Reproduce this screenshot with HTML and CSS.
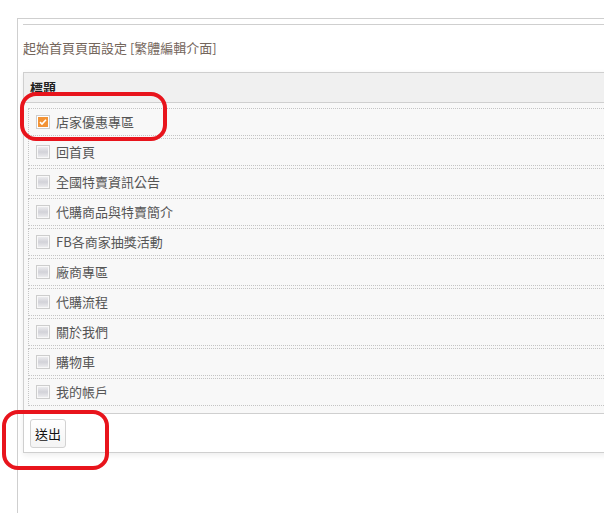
FILE: index.html
```html
<!DOCTYPE html>
<html lang="zh-Hant">
<head>
    <meta charset="UTF-8">
    <title>起始首頁頁面設定</title>
    <link rel="stylesheet" href="styles.css">
</head>
<body>
    <div class="page">
        <div class="rule"></div>
        <div class="title">起始首頁頁面設定 [繁體編輯介面]</div>

        <div class="panel">
            <div class="panel-head">標題</div>
            <div class="list">
                <label class="row"><span class="check checked"><svg viewBox="0 0 14 14" width="14" height="14"><rect x="0.5" y="0.5" width="13" height="13" fill="#fff" stroke="#cdcdcd"/><rect x="2" y="2" width="10" height="10" fill="#f29336"/><path d="M4 7.2 L6 9.1 L10 4.8" fill="none" stroke="#fff" stroke-width="1.6"/></svg></span><span class="name">店家優惠專區</span></label>
                <label class="row"><span class="check"></span><span class="name">回首頁</span></label>
                <label class="row"><span class="check"></span><span class="name">全國特賣資訊公告</span></label>
                <label class="row"><span class="check"></span><span class="name">代購商品與特賣簡介</span></label>
                <label class="row"><span class="check"></span><span class="name">FB各商家抽獎活動</span></label>
                <label class="row"><span class="check"></span><span class="name">廠商專區</span></label>
                <label class="row"><span class="check"></span><span class="name">代購流程</span></label>
                <label class="row"><span class="check"></span><span class="name">關於我們</span></label>
                <label class="row"><span class="check"></span><span class="name">購物車</span></label>
                <label class="row"><span class="check"></span><span class="name">我的帳戶</span></label>
            </div>
            <div class="foot">
                <button class="btn">送出</button>
            </div>
        </div>
    </div>

    <!-- red marks drawn over the screenshot -->
    <div class="mark mark-row"></div>
    <div class="mark mark-btn"></div>
</body>
</html>
```

FILE: styles.css
```css
* {
    margin: 0;
    padding: 0;
    box-sizing: border-box;
}

body {
    font-family: "Noto Sans CJK TC", "Noto Sans", sans-serif;
    font-size: 13px;
    background: #fff;
    overflow: hidden;
    height: 513px;
    position: relative;
}

.page {
    margin: 18px 0 0 17px;
    border-left: 1px solid #cfcfcf;
    border-top: 1px solid #cfcfcf;
    padding: 5px 0 0 5px;
    height: 495px;
}

.rule {
    border-top: 1px solid #cfcfcf;
}

.title {
    margin-top: 13px;
    line-height: 20px;
    color: #74665c;
}

.panel {
    margin-top: 14px;
    width: 620px;
    border: 1px solid #cfcfcf;
    box-shadow: 0 2px 6px rgba(0,0,0,0.08);
    background: #fff;
}

.panel-head {
    height: 30px;
    line-height: 30px;
    padding-left: 6px;
    background: #f0f0f0;
    border-bottom: 1px solid #cfcfcf;
    font-weight: bold;
    color: #222;
}

.list {
    background: #f8f8f8;
    padding: 5px 0 7px 4px;
    border-bottom: 1px solid #cfcfcf;
    display: flex;
    flex-direction: column;
    gap: 2px;
}

.row {
    height: 28px;
    border: 1px dotted #c4c4c4;
    display: flex;
    align-items: center;
    padding-left: 7px;
}

.check {
    width: 14px;
    height: 14px;
    border: 1px solid #cdcdcd;
    background: linear-gradient(#f0f0f2, #d2d2d8 50%, #f0f0f2);
    box-shadow: inset 0 0 0 1px #f8f8f8;
    display: block;
}

.check.checked {
    border: none;
    background: none;
    box-shadow: none;
}

.check svg {
    display: block;
}

.name {
    margin-left: 6px;
    color: #555;
    line-height: 20px;
}

.foot {
    padding: 5px 6px 4px;
}

.btn {
    font-family: inherit;
    font-size: 13px;
    font-weight: normal;
    color: #111;
    height: 29px;
    padding: 0 4px;
    border: 1px solid #d2d2d2;
    border-radius: 3px;
    background: linear-gradient(#fff, #f4f4f4);
    cursor: pointer;
}

.mark {
    position: absolute;
    border: 4px solid #e8141c;
    border-radius: 16px;
}

.mark-row {
    left: 20px;
    top: 92px;
    width: 147px;
    height: 49px;
}

.mark-btn {
    left: 2px;
    top: 410px;
    width: 107px;
    height: 60px;
}
```
